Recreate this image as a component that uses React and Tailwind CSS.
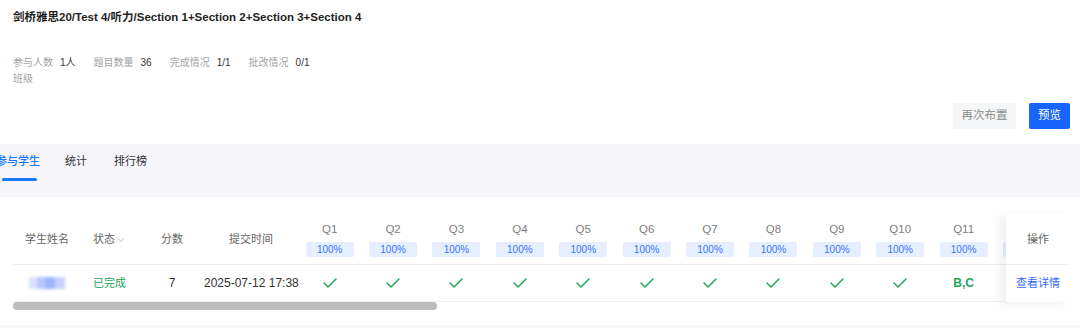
import React from 'react';

const questions = Array.from({ length: 12 }, (_, i) => ({
  label: `Q${i + 1}`,
  rate: '100%',
  answer: i === 10 ? 'B,C' : null,
}));

function Check() {
  return (
    <svg width="14" height="10" viewBox="0 0 14 10" fill="none">
      <polyline points="1,5 5,9 13,1" stroke="#23a55a" strokeWidth="1.5" strokeLinecap="round" strokeLinejoin="round" />
    </svg>
  );
}

function Info({ label, value }) {
  return (
    <span className="mr-[18px] flex items-center">
      <span className="text-[#a3a3a3]">{label}</span>
      <span className="ml-[7px] text-[#333]">{value}</span>
    </span>
  );
}

export default function App() {
  return (
    <div
      className="relative h-[329px] w-[1080px] overflow-hidden bg-white text-[#333]"
      style={{ fontFamily: '"Liberation Sans", "Noto Sans CJK SC", sans-serif' }}
    >
      <div className="px-[13px] pt-[7px]">
        <div className="h-[20px] whitespace-nowrap text-[11.5px] font-bold leading-[20px] text-[#1f1f1f]">
          剑桥雅思20/Test 4/听力/Section 1+Section 2+Section 3+Section 4
        </div>
        <div className="mt-[28px] flex h-[16px] items-center text-[10px] leading-[16px]">
          <Info label="参与人数" value="1人" />
          <Info label="题目数量" value="36" />
          <Info label="完成情况" value="1/1" />
          <Info label="批改情况" value="0/1" />
        </div>
        <div className="h-[16px] text-[10px] leading-[16px] text-[#a3a3a3]">班级</div>
        <div className="mt-[16px] flex justify-end gap-[13px]">
          <button className="h-[26px] w-[63px] rounded-[2px] bg-[#f5f6f7] text-[11.5px] text-[#8c8c8c]">再次布置</button>
          <button className="mr-[-3px] h-[26px] w-[41px] rounded-[2px] bg-[#1764ff] text-[11.5px] text-white">预览</button>
        </div>
      </div>

      <div className="mt-[15px] h-[53px] rounded-l-[3px] bg-[#f5f5fa] pt-[9px]">
        <div className="ml-[-4px] flex text-[11px] leading-[16px]">
          <div className="flex flex-col items-start">
            <span className="font-medium text-[#1677ff]">参与学生</span>
            <span className="ml-[6px] mt-[9px] h-[3px] w-[35px] rounded-full bg-[#1677ff]" />
          </div>
          <span className="ml-[25px] text-[#333]">统计</span>
          <span className="ml-[27px] text-[#333]">排行榜</span>
        </div>
      </div>

      <div className="relative mx-[13px] mt-[17px] w-[1057px]">
        <div className="overflow-hidden">
          <div className="flex h-[51px] w-max items-center border-b border-[#f0f0f0] text-[11px] text-[#666]">
            <div className="w-[68px] text-center">学生姓名</div>
            <div className="flex w-[59px] items-center pl-[12px]">
              状态
              <svg width="8" height="6" viewBox="0 0 8 6" className="ml-[2px] mt-[1px]" fill="none">
                <polyline points="1,1.5 4,4.5 7,1.5" stroke="#bbb" strokeWidth="1" />
              </svg>
            </div>
            <div className="w-[64px] text-center">分数</div>
            <div className="w-[94px] text-center">提交时间</div>
            {questions.map((q) => (
              <div key={q.label} className="flex w-[63.4px] flex-col items-center pb-[1px]">
                <span className="h-[16px] text-[11.5px] leading-[16px] text-[#808080]">{q.label}</span>
                <span className="mt-[5px] flex h-[15px] w-[48px] items-center justify-center rounded-[2px] bg-[#e6efff] text-[10px] text-[#3a74ff]">
                  {q.rate}
                </span>
              </div>
            ))}
          </div>
          <div className="flex h-[37px] w-max items-center border-b border-[#f0f0f0] text-[12px]">
            <div className="flex w-[68px] justify-center">
              <div className="flex h-[12px] w-[36px] blur-[1.5px]">
                <span className="h-full w-[8px] bg-[#d9e2ff]" />
                <span className="h-full w-[8px] bg-[#b8c8ff]" />
                <span className="h-full w-[10px] bg-[#9fb4ff]" />
                <span className="h-full w-[10px] bg-[#c6d3ff]" />
              </div>
            </div>
            <div className="w-[59px] pl-[12px] text-[11px] text-[#23a55a]">已完成</div>
            <div className="w-[64px] text-center">7</div>
            <div className="w-[94px] whitespace-nowrap text-center text-[#333]">2025-07-12 17:38</div>
            {questions.map((q) => (
              <div key={q.label} className="flex w-[63.4px] justify-center">
                {q.answer ? (
                  <span className="font-bold text-[#23a55a]">{q.answer}</span>
                ) : (
                  <Check />
                )}
              </div>
            ))}
          </div>
        </div>
        <div className="h-[8px] w-[424px] rounded-full bg-[#bcbcbc]" />

        <div className="absolute right-0 top-0 h-[88px] w-[64px] bg-white shadow-[-6px_2px_8px_rgba(0,0,0,0.06)]">
          <div className="flex h-[51px] items-center justify-center border-b border-[#f0f0f0] text-[11px] text-[#666]">
            操作
          </div>
          <div className="flex h-[37px] items-center justify-center text-[11px] text-[#2f6bff]">查看详情</div>
        </div>
      </div>

      <div className="mt-[15px] h-[3px] bg-[#f5f6f8]" />
    </div>
  );
}
